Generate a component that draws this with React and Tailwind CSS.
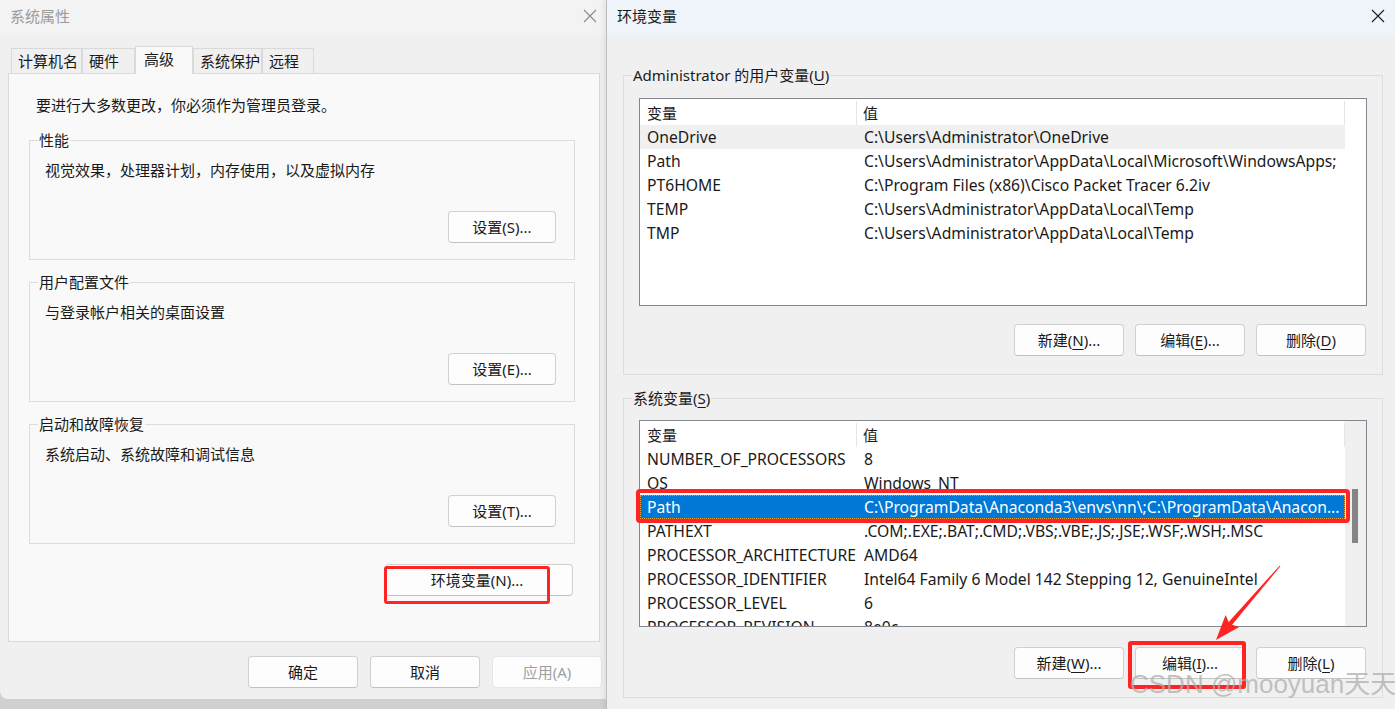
import React from "react";

const userVars = [
  ["OneDrive", "C:\\Users\\Administrator\\OneDrive"],
  ["Path", "C:\\Users\\Administrator\\AppData\\Local\\Microsoft\\WindowsApps;"],
  ["PT6HOME", "C:\\Program Files (x86)\\Cisco Packet Tracer 6.2iv"],
  ["TEMP", "C:\\Users\\Administrator\\AppData\\Local\\Temp"],
  ["TMP", "C:\\Users\\Administrator\\AppData\\Local\\Temp"],
];

const sysVars = [
  ["NUMBER_OF_PROCESSORS", "8"],
  ["OS", "Windows_NT"],
  ["Path", "C:\\ProgramData\\Anaconda3\\envs\\nn\\;C:\\ProgramData\\Anacon..."],
  ["PATHEXT", ".COM;.EXE;.BAT;.CMD;.VBS;.VBE;.JS;.JSE;.WSF;.WSH;.MSC"],
  ["PROCESSOR_ARCHITECTURE", "AMD64"],
  ["PROCESSOR_IDENTIFIER", "Intel64 Family 6 Model 142 Stepping 12, GenuineIntel"],
  ["PROCESSOR_LEVEL", "6"],
  ["PROCESSOR_REVISION", "8e0c"],
];

const CloseIcon = ({ color }) => (
  <svg width="14" height="14" viewBox="0 0 14 14">
    <path d="M1 1L13 13M13 1L1 13" stroke={color} strokeWidth="1.1" />
  </svg>
);

const U = ({ children }) => <span className="underline underline-offset-[3px]">{children}</span>;

const Btn = ({ children, className = "" }) => (
  <div
    className={`h-[32px] flex items-center justify-center rounded-[4px] border border-[#d0d0d0] border-b-[#c2c2c2] bg-[#fdfdfd] text-[15px] leading-[20px] ${className}`}
  >
    {children}
  </div>
);

const Group = ({ title, text, button, className = "" }) => (
  <fieldset className={`ml-[20px] w-[546px] border border-[#dcdcdc] flex flex-col pb-[16px] ${className}`}>
    <legend className="ml-[8px] px-[1px] leading-[20px]">{title}</legend>
    <div className="pl-[15px] mt-[10px] leading-[20px]">{text}</div>
    <Btn className="self-end mr-[18px] mt-[31px] w-[108px]">{button}</Btn>
  </fieldset>
);

const Tab = ({ label, width, active }) =>
  active ? (
    <div
      className={`${width} h-[28px] -mb-px relative z-10 bg-[#f9f9f9] border border-b-0 border-[#d9d9d9] pl-[8px] pt-[2px] leading-[20px]`}
    >
      {label}
    </div>
  ) : (
    <div className={`${width} h-[25px] bg-[#f0f0f0] border border-b-0 border-[#d9d9d9] pl-[6px] pt-[2px] leading-[20px]`}>
      {label}
    </div>
  );

const ListView = ({ rows, height, scroll, hoverIndex, selectedIndex }) => (
  <div className={`ml-[15px] w-[728px] ${height} border border-[#828790] bg-white flex overflow-hidden`}>
    <div className="w-[705px] flex flex-col">
      <div className="h-[26px] flex shrink-0 pt-[2px]">
        <div className="w-[217px] border-r border-[#e5e5e5] pl-[7px] flex items-center">变量</div>
        <div className="flex-1 border-r border-[#e5e5e5] pl-[6px] flex items-center">值</div>
      </div>
      {rows.map(([k, v], i) => (
        <div
          key={k}
          className={`h-[24px] shrink-0 flex items-center relative pt-[2px] text-[15.7px] ${
            i === selectedIndex ? "bg-[#0078d7] text-white" : i === hoverIndex ? "bg-[#f0f0f0]" : ""
          }`}
        >
          {i === selectedIndex && (
            <div className="absolute inset-0 border border-dotted border-[#e0a040]" />
          )}
          <div className="w-[217px] pl-[7px] whitespace-nowrap overflow-hidden">{k}</div>
          <div className="flex-1 pl-[7px] whitespace-nowrap overflow-hidden">{v}</div>
        </div>
      ))}
    </div>
    <div className={`flex-1 ${scroll ? "bg-[#f0f0f0]" : "bg-white"}`}>
      {scroll && <div className="ml-[7px] mt-[68px] w-[6px] h-[54px] bg-[#858585]" />}
    </div>
  </div>
);

export default function App() {
  return (
    <div className="relative w-[1395px] h-[709px] flex items-start overflow-hidden bg-[#d0d0d0] text-[15px] text-[#1a1a1a] font-['Noto_Sans','Noto_Sans_CJK_SC',sans-serif]">
      {/* 系统属性 */}
      <div className="w-[606px] h-[699px] shrink-0 flex flex-col bg-[#f0f0f0] rounded-bl-[8px]">
        <div className="h-[36px] shrink-0 flex items-center justify-between pl-[10px] pr-[9px] pb-[4px] bg-[#f3f3f3] text-[#9b9b9b]">
          <span className="leading-[20px]">系统属性</span>
          <CloseIcon color="#8a8a8a" />
        </div>
        <div className="mt-[10px] h-[27px] pl-[11px] flex items-end">
          <Tab label="计算机名" width="w-[71px]" />
          <Tab label="硬件" width="w-[53px]" />
          <Tab label="高级" width="w-[58px]" active />
          <Tab label="系统保护" width="w-[69px]" />
          <Tab label="远程" width="w-[52px]" />
        </div>
        <div className="ml-[8px] w-[592px] h-[569px] shrink-0 border border-[#d9d9d9] bg-[#f9f9f9] flex flex-col">
          <div className="pl-[27px] pt-[21px] leading-[20px]">要进行大多数更改，你必须作为管理员登录。</div>
          <Group className="mt-[15px]" title="性能" text="视觉效果，处理器计划，内存使用，以及虚拟内存" button="设置(S)..." />
          <Group className="mt-[12px]" title="用户配置文件" text="与登录帐户相关的桌面设置" button="设置(E)..." />
          <Group className="mt-[12px]" title="启动和故障恢复" text="系统启动、系统故障和调试信息" button="设置(T)..." />
          <Btn className="self-end mr-[26px] mt-[20px] w-[188px] pr-[4px]">环境变量(N)...</Btn>
        </div>
        <div className="mt-[14px] flex justify-end gap-[12px] pr-[4px]">
          <Btn className="w-[110px]">确定</Btn>
          <Btn className="w-[110px]">取消</Btn>
          <Btn className="w-[110px] bg-[#f5f5f5] border-[#e5e5e5] border-b-[#e5e5e5] text-[#a0a0a0]">应用(A)</Btn>
        </div>
      </div>

      {/* 环境变量 */}
      <div className="flex-1 h-[709px] flex flex-col bg-[#f0f0f0] border-l border-[#bdbdbd] shadow-[-2px_0_6px_rgba(0,0,0,0.08)]">
        <div className="h-[35px] shrink-0 flex items-center justify-between pl-[10px] pr-[10px] pb-[3px] bg-[#eef4f9]">
          <span className="leading-[20px]">环境变量</span>
          <CloseIcon color="#1a1a1a" />
        </div>
        <fieldset className="mt-[30px] ml-[16px] w-[760px] border border-[#dcdcdc] flex flex-col pb-[18px]">
          <legend className="ml-[8px] px-[1px] leading-[20px]">
            Administrator 的用户变量(<U>U</U>)
          </legend>
          <div className="mt-[13px]">
            <ListView rows={userVars} height="h-[208px]" hoverIndex={0} />
          </div>
          <div className="mt-[18px] flex justify-end gap-[11px] pr-[16px]">
            <Btn className="w-[110px]">新建(<U>N</U>)...</Btn>
            <Btn className="w-[110px]">编辑(<U>E</U>)...</Btn>
            <Btn className="w-[110px]">删除(<U>D</U>)</Btn>
          </div>
        </fieldset>
        <fieldset className="mt-[13px] ml-[16px] w-[760px] border border-[#dcdcdc] flex flex-col pb-[18px]">
          <legend className="ml-[8px] px-[1px] leading-[20px]">
            系统变量(<U>S</U>)
          </legend>
          <div className="mt-[12px]">
            <ListView rows={sysVars} height="h-[207px]" scroll selectedIndex={2} />
          </div>
          <div className="mt-[20px] flex justify-end gap-[11px] pr-[16px]">
            <Btn className="w-[110px]">新建(<U>W</U>)...</Btn>
            <Btn className="w-[110px] bg-[#e0eef9] border-[#0067c0] border-b-[#0067c0]">编辑(<U>I</U>)...</Btn>
            <Btn className="w-[110px]">删除(<U>L</U>)</Btn>
          </div>
        </fieldset>
      </div>

      {/* annotations */}
      <div className="absolute left-[384px] top-[566px] w-[166px] h-[38px] border-[3px] border-[#ff2424] rounded-[3px]" />
      <div className="absolute left-[636px] top-[489px] w-[714px] h-[34px] border-[4px] border-[#ff2424] rounded-[4px]" />
      <div className="absolute left-[1128px] top-[641px] w-[118px] h-[48px] border-[4px] border-[#ff2424] rounded-[3px]" />
      <svg className="absolute left-0 top-0 pointer-events-none" width="1395" height="709" viewBox="0 0 1395 709">
        <polygon
          points="1280.4,566.3 1232.1,624.7 1239.2,626.9 1216,640 1225.6,615.1 1228.7,621.9 1279.6,565.7"
          fill="#ff2424"
        />
      </svg>
      <div className="absolute left-[1130px] top-[671px] text-[26px] leading-none whitespace-nowrap text-[rgba(175,175,175,0.75)] font-['Liberation_Sans','Noto_Sans_CJK_SC',sans-serif]">
        CSDN @mooyuan天天
      </div>
    </div>
  );
}
